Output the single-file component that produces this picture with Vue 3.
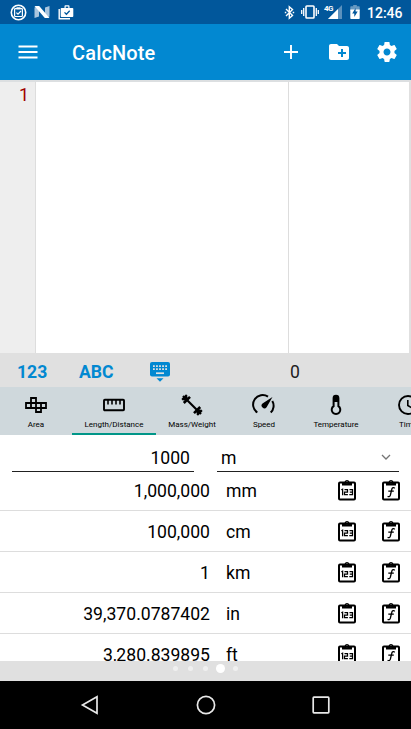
<script setup>
import { ref } from 'vue'

const tabs = [
  { id: 'area', label: 'Area' },
  { id: 'length', label: 'Length/Distance' },
  { id: 'mass', label: 'Mass/Weight' },
  { id: 'speed', label: 'Speed' },
  { id: 'temp', label: 'Temperature' },
  { id: 'time', label: 'Time' },
]
const active = ref('length')
const rows = [
  { value: '1,000,000', unit: 'mm' },
  { value: '100,000', unit: 'cm' },
  { value: '1', unit: 'km' },
  { value: '39,370.0787402', unit: 'in' },
  { value: '3,280.839895', unit: 'ft' },
]
const pages = 5
const page = 3
</script>

<template>
  <div class="screen">
    <header class="status">
      <div class="status-left">
        <svg width="17" height="17" viewBox="0 0 17 17">
          <circle cx="8.5" cy="8.500" r="7.200" fill="none" stroke="#fff" stroke-width="1.600" />
          <rect x="4.600" y="4.700" width="7.800" height="7.800" rx=".8" fill="none" stroke="#fff" stroke-width="1.200" />
          <path d="M6.500 3.300h4v2h-4z" fill="#fff" />
          <path d="M6.400 8.600l1.600 1.600 3-3.200" fill="none" stroke="#fff" stroke-width="1.200" />
        </svg>
        <svg class="n-icon" width="16" height="14" viewBox="0 0 16 14">
          <path d="M.5 2.500L5 1v10.500L.5 13zM11 2.500L15.500 1v10.500L11 13z" fill="#a9c5de" />
          <path d="M.5 1h4.700L15.500 13h-4.700z" fill="#fff" />
        </svg>
        <svg class="bag-icon" width="16" height="15" viewBox="0 0 16 15">
          <path d="M1.200 4v9.700H12" fill="none" stroke="#fff" stroke-width="1.400" />
          <path fill-rule="evenodd" fill="#fff" d="M3.500 3h3V1.200Q6.500.3 7.400.3h3.200q.9 0 .9.900V3h3q.8 0 .8.800v7.300q0 .9-.8.900h-11q-.8 0-.8-.9V3.800Q2.700 3 3.500 3zM7.700 1.500V3h2.600V1.500z" />
          <path d="M6.500 7.400l1.900 1.900 3.300-3.500" fill="none" stroke="#01579b" stroke-width="1.300" />
        </svg>
      </div>
      <div class="status-right">
        <svg width="11" height="15" viewBox="0 0 11 15">
          <path d="M2 4l6.500 6.500-3.200 2.800V1.700l3.200 2.800L2 11" fill="none" stroke="#fff" stroke-width="1.400" />
          <path d="M.8 6.700h1.500v1.500H.8zM8.700 6.700h1.500v1.500H8.700z" fill="#fff" />
        </svg>
        <svg class="vibrate" width="18" height="14" viewBox="0 0 18 14">
          <rect x="5" y="1" width="8" height="12" rx=".8" fill="none" stroke="#fff" stroke-width="1.600" />
          <path d="M2.700 3v8M.7 5v4M15.300 3v8M17.300 5v4" stroke="#fff" stroke-width="1.300" />
        </svg>
        <div class="signal">
          <span class="network">4G</span>
          <svg width="14" height="14" viewBox="0 0 14 14">
            <path d="M14 0v14H0z" fill="#5c91bd" />
            <path d="M10 4v10H0z" fill="#fff" />
          </svg>
        </div>
        <svg class="battery" width="10" height="14" viewBox="0 0 10 14">
          <path d="M3.200 0h3.600v1.300H9q.7 0 .7.700v4H.3V2q0-.7.700-.7h2.200z" fill="#6799c1" />
          <path d="M.3 4.500h9.400v8.700q0 .7-.7.700H1q-.7 0-.7-.7z" fill="#fff" />
          <path d="M5.600 3L2.200 8.500h2.100v3.400l3.400-5.500H5.600z" fill="#01579b" />
        </svg>
        <span class="clock">12:46</span>
      </div>
    </header>

    <div class="toolbar">
      <svg class="menu" width="20" height="14" viewBox="0 0 20 14">
        <path d="M.5 1.500h19M.5 7h19M.5 12.500h19" stroke="#fff" stroke-width="1.900" />
      </svg>
      <h1>CalcNote</h1>
      <svg class="add" width="24" height="24" viewBox="0 0 24 24">
        <path d="M12 5v14M5 12h14" stroke="#fff" stroke-width="1.900" />
      </svg>
      <svg width="24" height="24" viewBox="0 0 24 24">
        <path d="M20 6h-8l-2-2H4c-1.110 0-1.990.89-1.990 2L2 18c0 1.110.89 2 2 2h16c1.110 0 2-.89 2-2V8c0-1.110-.89-2-2-2zm-1 8h-3v3h-2v-3h-3v-2h3V9h2v3h3v2z" fill="#fff" />
      </svg>
      <svg width="24" height="24" viewBox="0 0 24 24">
        <path fill="#fff" d="M19.430 12.980c.04-.32.070-.64.070-.98s-.03-.66-.07-.98l2.110-1.650c.19-.15.240-.42.120-.64l-2-3.460c-.12-.22-.39-.3-.61-.22l-2.490 1c-.52-.4-1.080-.73-1.690-.98l-.38-2.650C14.460 2.180 14.250 2 14 2h-4c-.25 0-.46.180-.49.420l-.38 2.650c-.61.250-1.170.590-1.690.980l-2.490-1c-.23-.09-.49 0-.61.220l-2 3.460c-.13.220-.07.490.12.640l2.110 1.650c-.04.320-.07.650-.07.980s.03.660.070.980l-2.110 1.650c-.19.150-.24.420-.12.640l2 3.460c.12.220.39.3.61.220l2.490-1c.52.4 1.080.730 1.690.980l.38 2.650c.03.240.24.420.49.420h4c.25 0 .46-.18.490-.42l.38-2.650c.61-.25 1.170-.59 1.690-.98l2.490 1c.23.090.49 0 .61-.22l2-3.460c.12-.22.070-.49-.12-.64l-2.110-1.650zM12 15.500c-1.930 0-3.500-1.570-3.500-3.500s1.570-3.500 3.500-3.500 3.500 1.570 3.500 3.500-1.570 3.500-3.500 3.500z" />
      </svg>
    </div>

    <main class="editor">
      <div class="gutter">1</div>
      <div class="source"></div>
      <div class="results"></div>
    </main>

    <div class="keys">
      <span class="key-num">123</span>
      <span class="key-abc">ABC</span>
      <svg width="20" height="20" viewBox="0 0 20 20">
        <rect width="20" height="14.500" rx="2" fill="#0288d1" />
        <path d="M3 4.200h14M3 7.200h14" stroke="#e0e0e0" stroke-width="1.700" stroke-dasharray="1.800 1.250" />
        <path d="M6 11.200h8" stroke="#e0e0e0" stroke-width="1.700" />
        <path d="M6.500 16.300h7L10 19.800z" fill="#0288d1" />
      </svg>
      <span class="total">0</span>
    </div>

    <nav class="tabs">
      <button v-for="t in tabs" :key="t.id" :class="['tab', { active: t.id === active }]" @click="active = t.id">
        <svg width="24" height="24" viewBox="0 0 24 24" fill="none" stroke="#000" stroke-width="1.900">
          <path v-if="t.id === 'area'" stroke-width="1.800" d="M2 10h20v5H2zM7 15V5h5v14h5v-9M12 19h5" />
          <template v-else-if="t.id === 'length'">
            <rect x="2" y="6.800" width="20" height="10.400" rx=".8" />
            <path d="M6 7v4.500M10 7v4.500M14 7v4.500M18 7v4.500" stroke-width="1.600" />
          </template>
          <template v-else-if="t.id === 'mass'">
            <path d="M3 3l18 18" stroke-width="2.200" />
            <path d="M3.800 10l6.200-6.200M14 20.200l6.200-6.200" stroke-width="2.600" />
            <path d="M2.200 6.900l4.700-4.700M17.100 21.800l4.700-4.700" stroke-width="2.400" />
            <path d="M4.300 7.300l3-3M16.700 19.700l3-3" stroke-width="3" />
          </template>
          <template v-else-if="t.id === 'speed'">
            <path d="M5.300 19.500A9.300 9.300 0 0 1 16 3.700M20.300 8A9.300 9.300 0 0 1 18.700 19.500" stroke-width="2" />
            <path d="M20.500 4L14.600 14.300A2.800 2.800 0 1 1 10.500 10.500z" fill="#000" stroke="none" />
          </template>
          <template v-else-if="t.id === 'temp'">
            <path d="M9.600 13.200V5.200a2.400 2.400 0 0 1 4.800 0v8a4.300 4.300 0 1 1-4.800 0z" stroke-width="2" />
            <path d="M9.600 9V4.800a2.400 2.400 0 0 1 4.800 0V9z" fill="#000" stroke="none" />
          </template>
          <template v-else>
            <circle cx="12" cy="12" r="9" />
            <path d="M11.800 7v5.500l4 2.400" stroke-width="1.600" />
          </template>
        </svg>
        <span>{{ t.label }}</span>
      </button>
    </nav>

    <section class="converter">
      <div class="inputs">
        <div class="field amount">1000</div>
        <div class="field unit-select">
          <span>m</span>
          <svg width="10" height="7" viewBox="0 0 10 7">
            <path d="M1 1l4 4 4-4" fill="none" stroke="#757575" stroke-width="1.300" />
          </svg>
        </div>
      </div>
      <div v-for="r in rows" :key="r.unit" class="row">
        <span class="value">{{ r.value }}</span>
        <span class="unit">{{ r.unit }}</span>
        <svg v-for="kind in ['number', 'formula']" :key="kind" width="18" height="22" viewBox="0 0 18 22">
          <rect x="1" y="3.500" width="16" height="17" rx="1" fill="none" stroke="#000" stroke-width="2" />
          <path fill-rule="evenodd" fill="#000" d="M4 3h2.500a2.600 2.600 0 0 1 5 0H14v3.500H4zM9 2.200a1 1 0 1 0 0 2 1 1 0 0 0 0-2z" />
          <path v-if="kind === 'number'" d="M3.300 10.800l1.300-.6v6.100M6.500 10.500h3v2.500h-3v2.700h3.400M11.500 10.500h3v5.200h-3.200M11.800 13h2.700" fill="none" stroke="#000" stroke-width="1.250" />
          <path v-else d="M12.700 9.300c-.8-1.200-2.600-.8-3 1.200l-1.200 5.200c-.4 1.900-1.500 2.300-2.900 1.600M6.300 12.200h5.500" fill="none" stroke="#000" stroke-width="1.300" />
        </svg>
      </div>
    </section>

    <div class="pager">
      <i v-for="n in pages" :key="n" :class="{ current: n - 1 === page }"></i>
    </div>

    <footer class="system-nav">
      <svg width="20" height="20" viewBox="0 0 20 20"><path d="M17 1.700v16.600L2.500 10z" /></svg>
      <svg width="20" height="20" viewBox="0 0 20 20"><circle cx="10" cy="10" r="8.600" /></svg>
      <svg width="20" height="20" viewBox="0 0 20 20"><rect x="2.200" y="2.200" width="15.600" height="15.600" rx=".7" /></svg>
    </footer>
  </div>
</template>

<style>
body {
  margin: 0;
  overflow: hidden;
}
</style>

<style scoped>
.screen {
  width: 411px;
  height: 729px;
  display: flex;
  flex-direction: column;
  overflow: hidden;
  background: #fff;
  color: #000;
  font-family: Roboto, sans-serif;
}
.screen > * {
  flex: none;
  box-sizing: border-box;
}
svg {
  display: block;
  flex: none;
}
.status {
  height: 24px;
  padding: 0 8px 0 10px;
  display: flex;
  justify-content: space-between;
  align-items: center;
  background: #01579b;
  color: #fff;
}
.status-left,
.status-right {
  display: flex;
  align-items: center;
}
.n-icon {
  margin-left: 7px;
}
.bag-icon {
  margin-left: 8px;
}
.vibrate {
  margin-left: 6px;
}
.signal {
  display: flex;
  align-items: flex-end;
  margin-left: 5px;
}
.network {
  align-self: flex-start;
  width: 4px;
  font-size: 8px;
  line-height: 8px;
  font-weight: 700;
  letter-spacing: -0.500px;
  z-index: 1;
}
.battery {
  margin-left: 8px;
}
.clock {
  width: 36px;
  margin-left: 7px;
  font-size: 14px;
  font-weight: 500;
  line-height: 24px;
  padding-top: 2px;
}
.toolbar {
  height: 56px;
  padding: 0 12.500px 0 18px;
  display: flex;
  align-items: center;
  gap: 24px;
  background: #0288d1;
  color: #fff;
}
h1 {
  flex: 1;
  margin: 0 0 0 10px;
  font-size: 20px;
  font-weight: 500;
  line-height: 24px;
  letter-spacing: 0.150px;
  padding-top: 1px;
}
.editor {
  height: 273px;
  display: grid;
  grid-template-columns: 36px 253px 1fr;
  border-top: 2px solid #dcdfe1;
  border-right: 2px solid #e0e0e0;
}
.gutter {
  padding: 3px 6px 0 0;
  background: #eee;
  border-right: 1px solid #ddd;
  color: #a00000;
  font-size: 18px;
  line-height: 20px;
  text-align: right;
}
.source {
  border-right: 1px solid #ddd;
}
.keys {
  height: 34px;
  padding: 3px 17px 0;
  display: flex;
  align-items: center;
  background: #e0e0e0;
  color: #0288d1;
  font-size: 17.600px;
  font-weight: 700;
}
.key-num {
  width: 62px;
}
.key-abc {
  width: 71px;
}
.total {
  margin-left: 120px;
  color: #212121;
  font-weight: 400;
}
.tabs {
  height: 48px;
  display: flex;
  background: #cfd8dc;
  overflow: hidden;
}
.tab {
  flex: none;
  box-sizing: border-box;
  width: 72px;
  height: 48px;
  padding: 6px 0 0;
  border: 0;
  border-bottom: 2px solid transparent;
  background: none;
  display: flex;
  flex-direction: column;
  align-items: center;
  color: #000;
  font: 8px/15px Roboto, sans-serif;
}
.tab.active {
  width: 84px;
  border-bottom-color: #009688;
}
.converter {
  height: 226px;
  overflow: hidden;
  font-size: 17.600px;
}
.inputs {
  display: flex;
  gap: 23px;
  height: 37px;
  padding: 0 12px;
}
.field {
  flex: 1;
  box-sizing: border-box;
  height: 37px;
  padding: 10px 4px 0;
  border-bottom: 1px solid #212121;
  line-height: 26px;
}
.amount {
  text-align: right;
}
.unit-select {
  display: flex;
  justify-content: space-between;
}
.unit-select svg {
  margin: 9px 4px 0 0;
}
.row {
  box-sizing: border-box;
  height: 41px;
  display: flex;
  align-items: center;
  border-bottom: 1px solid #ddd;
}
.row:nth-child(2) {
  height: 39px;
  padding-bottom: 2px;
}
.value,
.unit {
  padding-top: 2px;
}
.value {
  width: 210px;
  text-align: right;
}
.unit {
  width: 112px;
  margin-left: 16px;
}
.row svg + svg {
  margin-left: 26px;
}
.pager {
  height: 20px;
  padding-bottom: 5px;
  display: flex;
  justify-content: center;
  align-items: center;
  gap: 10px;
  background: #e0e0e0;
}
.pager i {
  width: 5px;
  height: 5px;
  border-radius: 50%;
  background: #f0f0f0;
}
.pager .current {
  width: 9px;
  height: 9px;
  margin: 0 -2px;
  background: #fff;
}
.system-nav {
  height: 48px;
  padding: 0 80px;
  display: flex;
  justify-content: space-between;
  align-items: center;
  background: #000;
}
.system-nav svg {
  fill: none;
  stroke: #e8e8e8;
  stroke-width: 1.700;
}
</style>
